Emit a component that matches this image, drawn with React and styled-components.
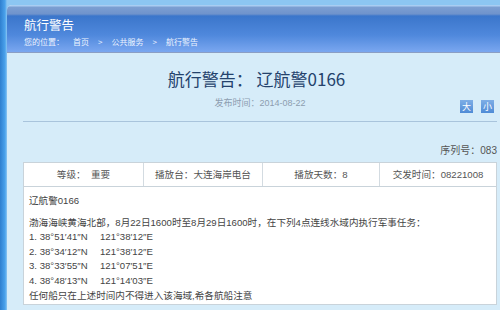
import styled, { createGlobalStyle } from "styled-components";

const Global = createGlobalStyle`
  html, body { margin: 0; padding: 0; }
  body {
    width: 500px;
    height: 310px;
    overflow: hidden;
    background: #3a8fdc;
    font-family: "Liberation Sans", "Noto Sans CJK SC", sans-serif;
  }
`;

const Frame = styled.div`
  width: 500px;
  height: 310px;
  background: linear-gradient(to right, #2f7fcf 0, #4aa2ec 5px, #8cc6f2 7px);
  padding: 5px 0 0 7px;
  box-sizing: border-box;
  overflow: hidden;
`;

const Inner = styled.div`
  height: 100%;
  background: #d6ecf9;
  border-top-left-radius: 5px;
  overflow: hidden;
`;

const Header = styled.div`
  height: 48px;
  box-sizing: border-box;
  padding: 13px 0 0 17px;
  background: linear-gradient(
    to bottom,
    #a9cdf2 0,
    #a9cdf2 1px,
    #7c9fd2 2px,
    #6f93cc 9px,
    #3b76cb 11px,
    #4f88dc 30px,
    #7aa7f0 47px
  );
  border-bottom: 1px solid #8b9ec4;
  color: #fff;
`;

const HeaderTitle = styled.div`
  font-family: "Noto Sans CJK SC", sans-serif;
  font-size: 12.5px;
  line-height: 14px;
`;

const Crumbs = styled.div`
  margin-top: 5px;
  font-family: "Noto Sans CJK SC", sans-serif;
  font-size: 8px;
  line-height: 9px;
  color: #eef4ff;
  span { margin-right: 9px; }
`;

const Content = styled.div`
  padding: 0 3px 0 16px;
`;

const Title = styled.h1`
  margin: 15px 0 0;
  font-family: "Noto Sans CJK SC", sans-serif;
  font-weight: normal;
  font-size: 17px;
  line-height: 22px;
  color: #24426c;
  text-align: center;
  padding-right: 7px;
`;

const DateRow = styled.div`
  margin-top: 7px;
  height: 16px;
  display: grid;
  grid-template-columns: 1fr auto 1fr;
`;

const DateText = styled.div`
  grid-column: 2;
  font-size: 9px;
  line-height: 12px;
  color: #8d9db0;
`;

const SizeButtons = styled.div`
  grid-column: 3;
  justify-self: end;
  align-self: end;
  display: flex;
  gap: 8px;
  margin-right: 3px;
`;

const SizeButton = styled.span`
  width: 13px;
  height: 13px;
  display: flex;
  align-items: center;
  justify-content: center;
  background: linear-gradient(#7eaee6, #4f8bd6);
  color: #fff;
  font-family: "Noto Sans CJK SC", sans-serif;
  font-size: 9px;
  line-height: 1;
`;

const Rule = styled.div`
  margin-top: 8px;
  height: 1px;
  background: #a9c4dc;
`;

const Serial = styled.div`
  margin-top: 22px;
  text-align: right;
  font-size: 10px;
  line-height: 14px;
  color: #555;
`;

const InfoTable = styled.div`
  margin-top: 4px;
  display: grid;
  grid-template-columns: 119px 119px 117px 1fr;
  background: #fff;
  border: 1px solid #c9d3da;
`;

const Cell = styled.div`
  height: 23px;
  line-height: 23px;
  text-align: center;
  font-size: 9.6px;
  color: #555;
  border-left: ${(p) => (p.$first ? "none" : "1px solid #d3dbe1")};
  white-space: nowrap;
`;

const Body = styled.div`
  background: #fff;
  border: 1px solid #c9d3da;
  border-top: none;
  height: 118px;
  box-sizing: border-box;
  padding: 7px 5px 0;
  font-size: 9.6px;
  line-height: 14.6px;
  color: #444;
`;

const Para = styled.div`
  margin-bottom: ${(p) => p.$gap || 0}px;
  white-space: nowrap;
`;

const Lat = styled.span`
  display: inline-block;
  width: 71px;
`;

const points = [
  ["1. 38°51′41″N", "121°38′12″E"],
  ["2. 38°34′12″N", "121°38′12″E"],
  ["3. 38°33′55″N", "121°07′51″E"],
  ["4. 38°48′13″N", "121°14′03″E"],
];

export default function App() {
  return (
    <>
      <Global />
      <Frame>
        <Inner>
          <Header>
            <HeaderTitle>航行警告</HeaderTitle>
            <Crumbs>
              <span>您的位置：</span>
              <span>首页</span>
              <span>&gt;</span>
              <span>公共服务</span>
              <span>&gt;</span>
              <span>航行警告</span>
            </Crumbs>
          </Header>
          <Content>
            <Title>航行警告： 辽航警0166</Title>
            <DateRow>
              <DateText>发布时间：2014-08-22</DateText>
              <SizeButtons>
                <SizeButton>大</SizeButton>
                <SizeButton>小</SizeButton>
              </SizeButtons>
            </DateRow>
            <Rule />
            <Serial>序列号：083</Serial>
            <InfoTable>
              <Cell $first>等级：&nbsp;&nbsp;重要</Cell>
              <Cell>播放台：大连海岸电台</Cell>
              <Cell>播放天数：8</Cell>
              <Cell>交发时间：08221008</Cell>
            </InfoTable>
            <Body>
              <Para $gap={7}>辽航警0166</Para>
              <Para>
                渤海海峡黄海北部，8月22日1600时至8月29日1600时，在下列4点连线水域内执行军事任务：
              </Para>
              {points.map(([lat, lon]) => (
                <Para key={lat}>
                  <Lat>{lat}</Lat>
                  {lon}
                </Para>
              ))}
              <Para>任何船只在上述时间内不得进入该海域,希各航船注意</Para>
            </Body>
          </Content>
        </Inner>
      </Frame>
    </>
  );
}
